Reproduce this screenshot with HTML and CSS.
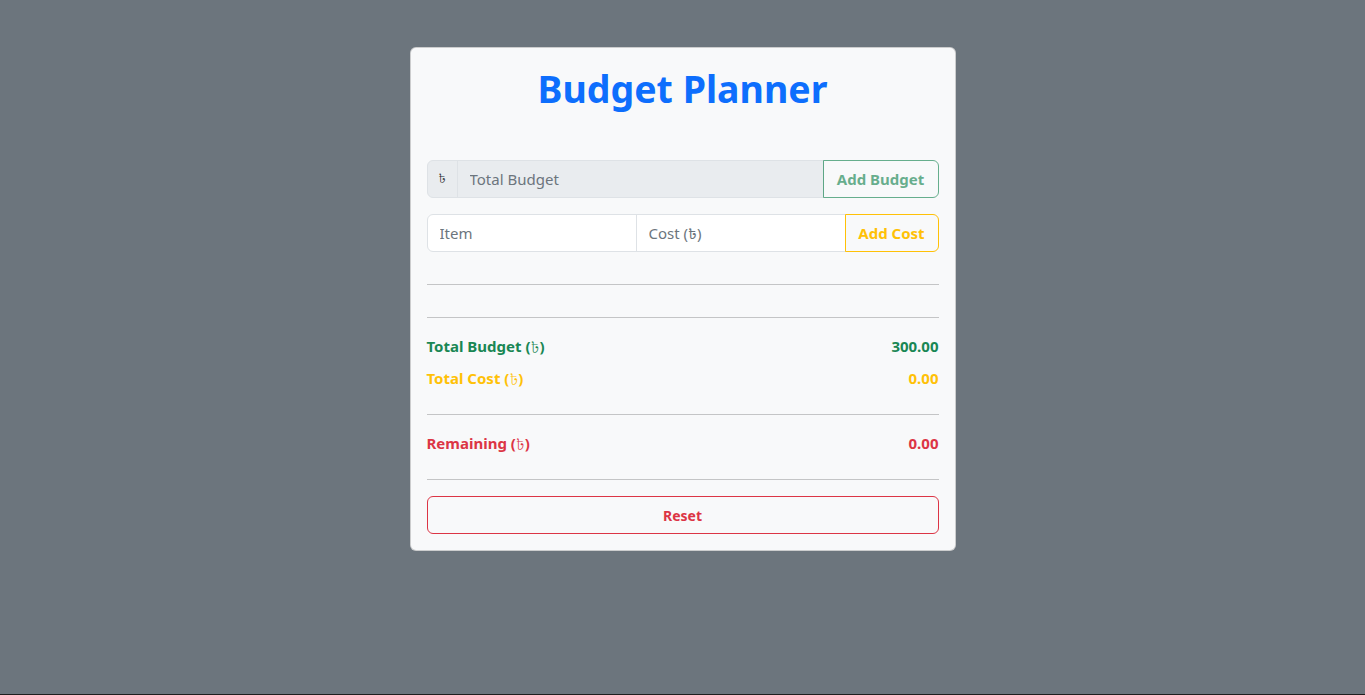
FILE: index.html
```html
<!DOCTYPE html>
<html lang="en">
<head>
<meta charset="utf-8">
<title>Budget Planner</title>
<link rel="stylesheet" href="styles.css">
</head>
<body>
<main class="page">
  <section class="card">
    <h1 class="title">Budget Planner</h1>
    <div class="group">
      <span class="addon">৳</span>
      <input class="field field-disabled" type="text" placeholder="Total Budget" disabled>
      <button class="btn btn-success" disabled>Add Budget</button>
    </div>
    <div class="group group-cost">
      <input class="field" type="text" placeholder="Item">
      <input class="field" type="text" placeholder="Cost (৳)">
      <button class="btn btn-warning">Add Cost</button>
    </div>
    <hr class="rule">
    <ul class="items"></ul>
    <hr class="rule">
    <div class="line text-success"><span>Total Budget (<span class="taka">৳</span>)</span><span>300.00</span></div>
    <div class="line text-warning"><span>Total Cost (<span class="taka">৳</span>)</span><span>0.00</span></div>
    <hr class="rule">
    <div class="line text-danger"><span>Remaining (<span class="taka">৳</span>)</span><span>0.00</span></div>
    <hr class="rule">
    <button class="btn btn-danger btn-block">Reset</button>
  </section>
</main>
</body>
</html>
```
FILE: styles.css
```css
* { box-sizing: border-box; }
html { background: #1e1e1e; }
body {
  margin: 0;
  height: 694px;
  background: #6c757d;
  font-family: "Noto Sans", "Open Sans", "Noto Sans Bengali", sans-serif;
  font-size: 15px;
  line-height: 1.5;
  color: #212529;
}
.page {
  display: flex;
  justify-content: center;
  padding-top: 47px;
}
.card {
  width: 546px;
  background: #f8f9fa;
  border: 1px solid rgba(0,0,0,.175);
  border-radius: 6px;
  padding: 16px;
  display: flex;
  flex-direction: column;
}
.title {
  margin: 0 0 48px;
  font-size: 37.5px;
  line-height: 50px;
  font-weight: 700;
  color: #0d6efd;
  text-align: center;
  height: 48px;
}
.group {
  display: flex;
  height: 38px;
}
.group-cost { margin-top: 16px; margin-bottom: 16px; }
.addon {
  width: 31px;
  flex: none;
  display: flex;
  align-items: center;
  justify-content: center;
  font-size: 13px;
  font-weight: 300;
  background: #e9ecef;
  border: 1px solid #dee2e6;
  border-radius: 6px 0 0 6px;
  color: #212529;
}
.field {
  flex: 1 1 0;
  min-width: 0;
  height: 38px;
  padding: 6px 12px;
  font: inherit;
  color: #212529;
  background: #fff;
  border: 1px solid #dee2e6;
  margin-left: -1px;
  outline: none;
}
.group-cost .field:first-child { margin-left: 0; border-radius: 6px 0 0 6px; }
.field::placeholder { color: #6c757d; opacity: 1; }
.field-disabled { background: #e9ecef; }
.btn {
  flex: none;
  height: 38px;
  padding: 6px 0;
  font: inherit;
  font-weight: 700;
  white-space: nowrap;
  background: transparent;
  border: 1px solid;
  border-radius: 0 6px 6px 0;
  margin-left: -1px;
  cursor: pointer;
}
.btn-success { color: #198754; border-color: #198754; width: 116px; }
.btn:disabled { opacity: .65; }
.btn-warning { color: #ffc107; border-color: #ffc107; width: 94px; }
.btn-danger {
  color: #dc3545;
  border-color: #dc3545;
  border-radius: 6px;
  margin-left: 0;
  font-size: 14px;
}
.btn-block { width: 100%; }
.rule {
  margin: 16px 0;
  border: 0;
  border-top: 1px solid #c4c5c6;
  height: 0;
}
.items { margin: 0; padding: 0; list-style: none; }
.line {
  display: flex;
  justify-content: space-between;
  font-weight: 700;
  font-size: 15px;
  line-height: 24px;
  margin-bottom: 8px;
}
.taka { font-weight: 300; }
.text-success { color: #198754; }
.text-warning { color: #ffc107; }
.text-danger { color: #dc3545; }
```
